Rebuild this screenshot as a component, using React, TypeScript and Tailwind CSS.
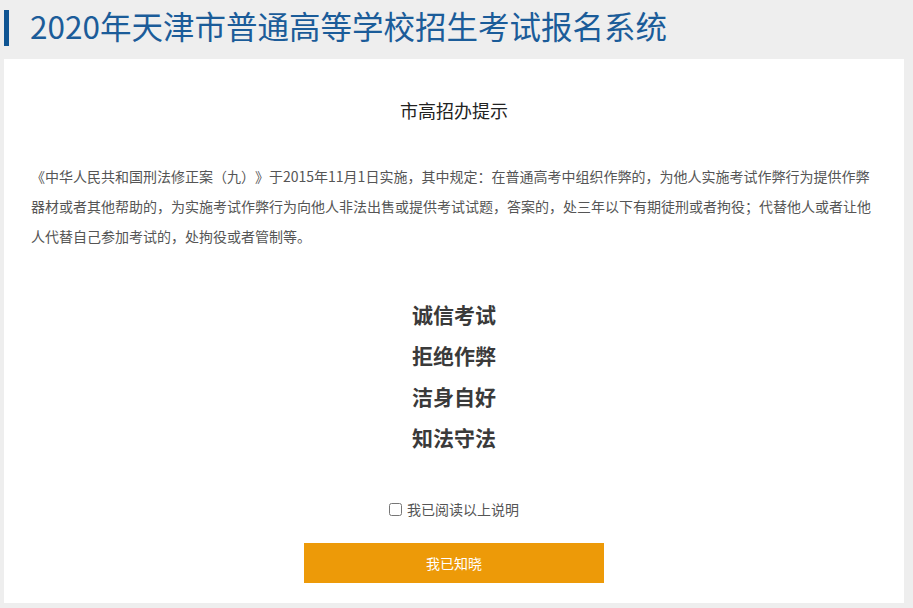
import React from "react";

const slogans = ["诚信考试", "拒绝作弊", "洁身自好", "知法守法"];

const App = () => {
  return (
    <div
      className="min-h-[608px] w-[913px] bg-[#eeeeee] text-[#333333] [text-spacing-trim:space-all]"
      style={{ fontFamily: '"Noto Sans CJK SC", "Noto Sans", sans-serif' }}
    >
      {/* header */}
      <div className="flex items-start pt-[10px] h-[59px]">
        <div className="ml-[4px] h-[36px] w-[5px] bg-[#0f5593]" />
        <h1 className="ml-[21px] -mt-[3px] text-[31.5px] leading-[36px] text-[#1b5c99]">
          2020年天津市普通高等学校招生考试报名系统
        </h1>
      </div>

      {/* panel */}
      <div className="ml-[4px] w-[900px] h-[544px] bg-white px-[27px] pt-[39px] flex flex-col">
        <h2 className="text-center text-[18px] leading-[24px] text-[#222222]">市高招办提示</h2>

        <p className="mt-[39px] text-[14px] leading-[30px] text-[#555555]">
          《中华人民共和国刑法修正案（九）》于2015年11月1日实施，其中规定：在普通高考中组织作弊的，为他人实施考试作弊行为提供作弊器材或者其他帮助的，为实施考试作弊行为向他人非法出售或提供考试试题，答案的，处三年以下有期徒刑或者拘役；代替他人或者让他人代替自己参加考试的，处拘役或者管制等。
        </p>

        <div className="mt-[43px] flex flex-col items-center">
          {slogans.map((s) => (
            <div key={s} className="text-[21px] leading-[41px] font-bold text-[#3a3a3a]">
              {s}
            </div>
          ))}
        </div>

        <label className="mt-[41px] flex items-center justify-center gap-[5px] h-[20px] text-[14px] text-[#555555]">
          <input type="checkbox" className="w-[13px] h-[13px] accent-[#ec9a07]" />
          <span>我已阅读以上说明</span>
        </label>

        <button className="mt-[24px] mx-auto w-[300px] h-[40px] bg-[#ed9a08] text-white text-[14px]">
          我已知晓
        </button>
      </div>
    </div>
  );
};

export default App;
